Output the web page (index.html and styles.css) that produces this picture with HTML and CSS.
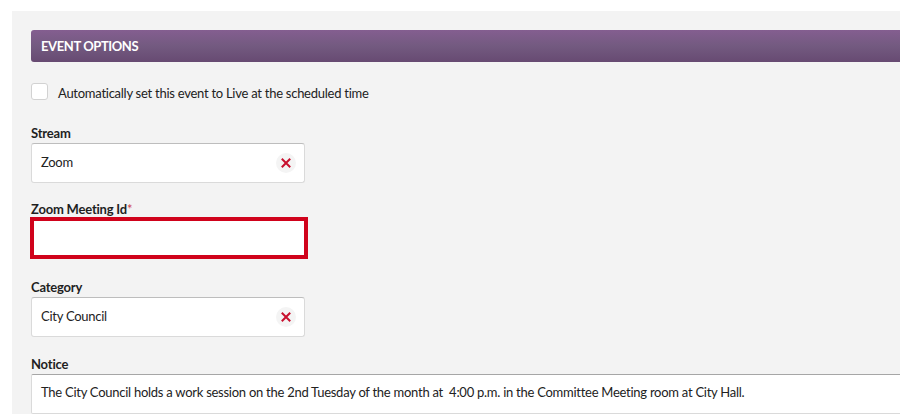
FILE: index.html
```html
<!DOCTYPE html>
<html lang="en">
<head>
<meta charset="utf-8">
<title>Event Options</title>
<link rel="stylesheet" href="styles.css">
</head>
<body>
<div class="panel">
  <div class="section-header">EVENT OPTIONS</div>

  <label class="check-row">
    <span class="checkbox"></span>
    <span class="check-text">Automatically set this event to Live at the scheduled time</span>
  </label>

  <div class="field field-stream">
    <div class="field-label">Stream</div>
    <div class="select">
      <span class="select-value">Zoom</span>
      <span class="clear-btn">
        <svg width="10" height="10" viewBox="0 0 10 10"><path d="M1.5 1.5 L8.5 8.5 M8.5 1.5 L1.5 8.5" stroke="#c8102e" stroke-width="2" stroke-linecap="square"/></svg>
      </span>
    </div>
  </div>

  <div class="field field-zoom">
    <div class="field-label">Zoom Meeting Id<span class="req">*</span></div>
    <div class="text-input error"></div>
  </div>

  <div class="field field-category">
    <div class="field-label">Category</div>
    <div class="select">
      <span class="select-value">City Council</span>
      <span class="clear-btn">
        <svg width="10" height="10" viewBox="0 0 10 10"><path d="M1.5 1.5 L8.5 8.5 M8.5 1.5 L1.5 8.5" stroke="#c8102e" stroke-width="2" stroke-linecap="square"/></svg>
      </span>
    </div>
  </div>

  <div class="field field-notice">
    <div class="field-label">Notice</div>
    <div class="textarea">The City Council holds a work session on the 2nd Tuesday of the month at&nbsp; 4:00 p.m. in the Committee Meeting room at City Hall.</div>
  </div>
</div>
</body>
</html>
```

FILE: styles.css
```css
html, body {
  margin: 0;
  padding: 0;
  background: #ffffff;
  overflow: hidden;
}

body {
  font-family: Lato, "Liberation Sans", sans-serif;
  color: #222222;
  font-size: 13px;
  letter-spacing: -0.26px;
}

.panel {
  margin: 11px 0 0 12px;
  width: 1000px;
  min-height: 420px;
  background: #f3f3f3;
  padding: 19px 0 0 19px;
  box-sizing: border-box;
}

.section-header {
  height: 32px;
  line-height: 32px;
  padding-left: 10px;
  border-radius: 3px 0 0 3px;
  background: linear-gradient(to bottom, #845e90 0%, #735a80 50%, #674a72 100%);
  color: #ffffff;
  font-weight: 700;
  font-size: 13px;
  letter-spacing: -0.4px;
}

.check-row {
  display: flex;
  align-items: center;
  margin-top: 21px;
  height: 17px;
}

.checkbox {
  width: 15px;
  height: 15px;
  border: 1px solid #d2d2d2;
  border-radius: 3px;
  background: #ffffff;
  flex: none;
}

.check-text {
  margin-left: 10px;
  font-size: 13px;
  color: #222222;
  margin-top: 2px;
}

.field-label {
  font-weight: 700;
  font-size: 13px;
  line-height: 16px;
  height: 16px;
  margin-bottom: 2px;
  color: #1f1f1f;
  letter-spacing: -0.2px;
}

.req {
  color: #d0454f;
  font-weight: 400;
}

.field-stream { margin-top: 25px; }
.field-zoom { margin-top: 18px; }
.field-category { margin-top: 20px; }
.field-notice { margin-top: 19px; }

.select {
  width: 274px;
  height: 40px;
  box-sizing: border-box;
  border: 1px solid #dadada;
  border-top-color: #bdbdbd;
  border-radius: 3px;
  background: #ffffff;
  display: flex;
  align-items: center;
  justify-content: space-between;
  padding: 0 9px 0 9px;
}

.select-value {
  font-size: 13px;
  color: #222222;
  margin-top: -2px;
}

.clear-btn {
  width: 20px;
  height: 20px;
  border-radius: 50%;
  background: #f4f4f4;
  display: flex;
  align-items: center;
  justify-content: center;
  margin-right: -1px;
}

.text-input.error {
  width: 278px;
  height: 42px;
  box-sizing: border-box;
  border: 4px solid #d0021b;
  background: #ffffff;
  margin: -2px 0 0 -1px;
}

.textarea {
  width: 960px;
  height: 40px;
  box-sizing: border-box;
  border: 1px solid #dadada;
  border-top-color: #a6a6a6;
  border-radius: 2px;
  background: #ffffff;
  padding: 9px 9px 0 9px;
  font-size: 13px;
  color: #222222;
  white-space: nowrap;
}
```
